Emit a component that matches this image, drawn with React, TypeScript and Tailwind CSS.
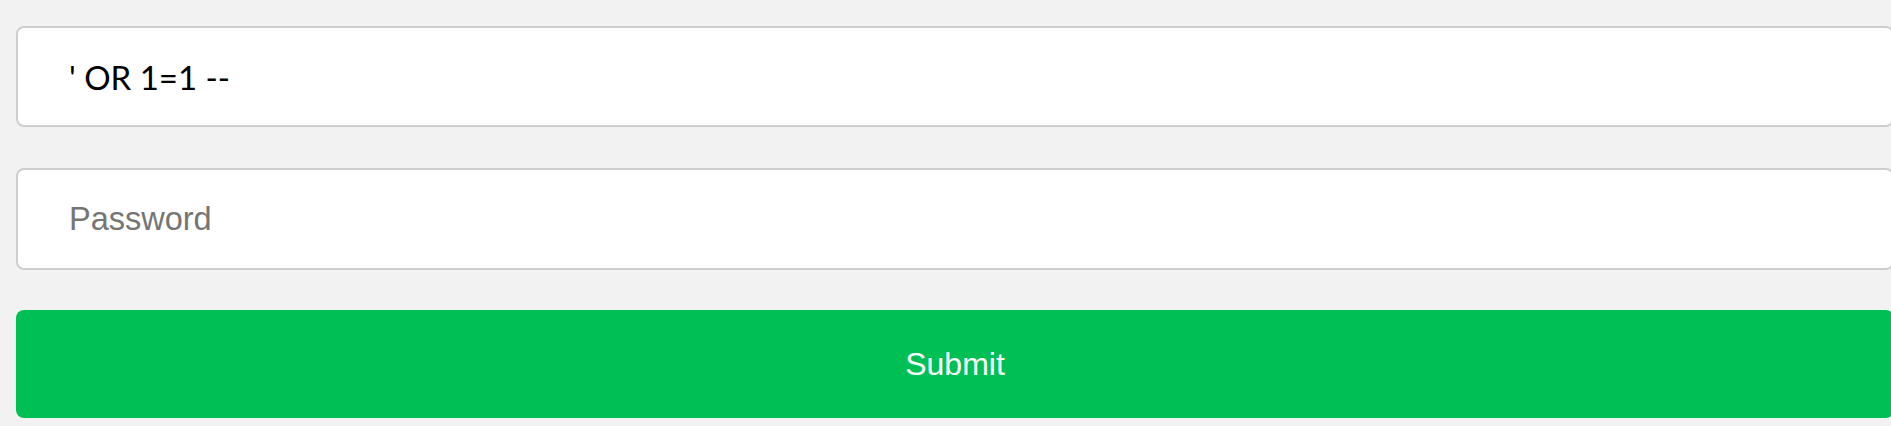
import React from "react";

export default function App() {
  return (
    <div className="min-h-[426px] w-full overflow-hidden bg-[#f2f2f2] pl-[16px] pt-[26px]">
      <div className="flex w-[calc(100%+3px)] flex-col">
        <input
          type="text"
          defaultValue="' OR 1=1 --"
          className="h-[101px] w-full rounded-[8px] border-2 border-[#cecece] bg-white pl-[51px] font-['Lato',_'Open_Sans',_sans-serif] text-[33px] text-black outline-none"
        />
        <input
          type="password"
          placeholder="Password"
          className="mt-[41px] h-[102px] w-full rounded-[8px] border-2 border-[#cecece] bg-white pl-[51px] font-['Liberation_Sans',_Arial,_sans-serif] text-[32.5px] text-black outline-none placeholder:text-[#757575]"
        />
        <button
          type="button"
          className="mt-[40px] h-[108px] w-full rounded-[8px] bg-[#00c055] font-['Liberation_Sans',_Arial,_sans-serif] text-[32px] text-white"
        >
          Submit
        </button>
      </div>
    </div>
  );
}
